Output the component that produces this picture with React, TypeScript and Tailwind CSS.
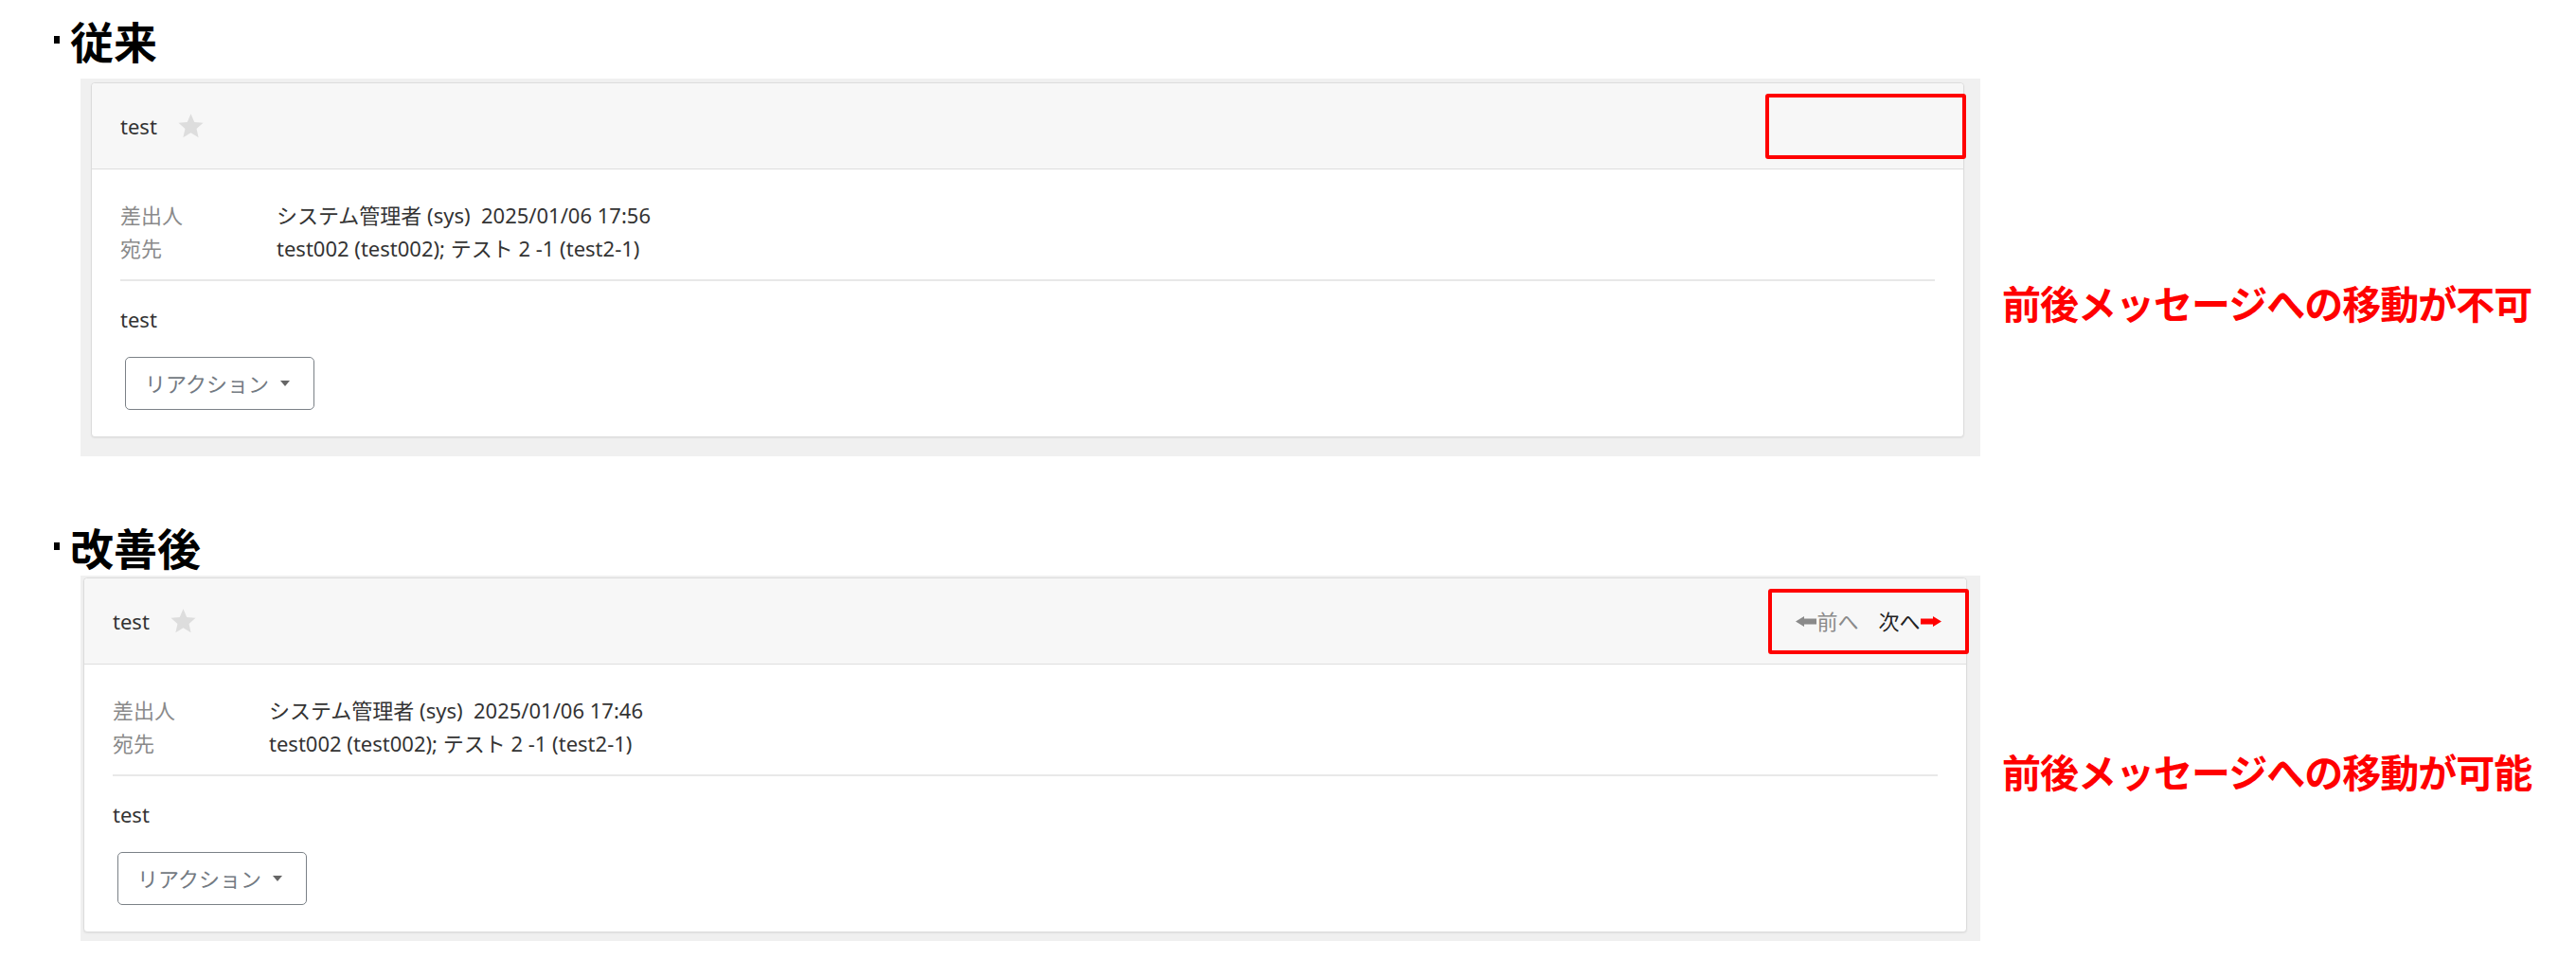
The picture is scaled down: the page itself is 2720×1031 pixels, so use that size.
import React from "react";

const BASE_FONT = "font-['Noto_Sans','Noto_Sans_CJK_JP',sans-serif]";

function Star() {
  return (
    <svg width="29" height="28" viewBox="0 0 24 23" className="block">
      <polygon
        points="12,1 15.1,8.2 22.8,8.9 17,14 18.7,21.6 12,17.6 5.3,21.6 7,14 1.2,8.9 8.9,8.2"
        fill="#dddddd"
      />
    </svg>
  );
}

function Arrow({ dir, color }: { dir: "left" | "right"; color: string }) {
  const pts =
    dir === "left"
      ? "0,5.5 9,0 9,2.5 22,2.5 22,8.5 9,8.5 9,11"
      : "22,5.5 13,0 13,2.5 0,2.5 0,8.5 13,8.5 13,11";
  return (
    <svg width="22" height="11" viewBox="0 0 22 11" className="block">
      <polygon points={pts} fill={color} />
    </svg>
  );
}

function Heading({ children }: { children: React.ReactNode }) {
  return (
    <>
      <span className="mr-[11px] inline-block h-[8px] w-[6px] bg-black" />
      {children}
    </>
  );
}

function MessageCard({ time, withNav }: { time: string; withNav?: boolean }) {
  return (
    <div className="rounded-[4px] border border-[#dcdcdc] bg-white shadow-[0_1px_2px_rgba(0,0,0,0.06)]">
      {/* header */}
      <div className="flex h-[91px] items-center justify-between rounded-t-[4px] border-b border-[#dedede] bg-[#f7f7f7] pl-[30px]">
        <div className="flex items-center gap-[21px]">
          <span className="text-[22px] leading-[35px] text-[#333]">test</span>
          <Star />
        </div>
        <div className="-mr-[3px] flex h-[69px] w-[212px] items-center justify-center rounded-[3px] border-[4px] border-[#ff0000]">
          {withNav && (
            <div className="flex items-center text-[22px] leading-[30px]">
              <span className="flex items-center text-[#8a8a8a]">
                <Arrow dir="left" color="#8a8a8a" />
                前へ
              </span>
              <span className="ml-[21px] flex items-center text-[#222]">
                次へ
                <Arrow dir="right" color="#ff0000" />
              </span>
            </div>
          )}
        </div>
      </div>

      {/* body */}
      <div className="px-[30px] pt-[31px] pb-[28px] text-[22px] leading-[35px]">
        <div className="grid grid-cols-[165px_1fr]">
          <span className="text-[#8a8a8a]">差出人</span>
          <span className="whitespace-pre text-[#333]">{`システム管理者 (sys)  ${time}`}</span>
          <span className="text-[#8a8a8a]">宛先</span>
          <span className="text-[#333]">test002 (test002); テスト 2 -1 (test2-1)</span>
        </div>
        <div className="mt-[15px] h-[2px] bg-[#e8e8e8]" />
        <p className="mt-[23px] text-[#333]">test</p>
        <button className="mt-[22px] ml-[5px] flex h-[56px] w-[200px] items-center rounded-[5px] border border-[#7b8187] bg-white pl-[20px] text-[22px] text-[#737a82]">
          リアクション
          <span className="ml-[12px] h-0 w-0 border-x-[5px] border-t-[6px] border-x-transparent border-t-[#666]" />
        </button>
      </div>
    </div>
  );
}

export default function App() {
  return (
    <div className={`h-[1031px] w-[2720px] overflow-hidden bg-white ${BASE_FONT}`}>
      {/* 従来 */}
      <h2 className="flex h-[83px] items-center pl-[57px] font-['Noto_Sans_CJK_JP',sans-serif] text-[46px] font-bold leading-none text-black">
        <Heading>従来</Heading>
      </h2>
      <div className="flex items-start">
        <div className="ml-[85px] w-[2006px] bg-[#f0f0f0] pt-[4px] pr-[17px] pb-[20px] pl-[11px]">
          <MessageCard time="2025/01/06 17:56" />
        </div>
        <p className="mt-[212px] ml-[23px] font-['Noto_Sans_CJK_JP',sans-serif] text-[41px] font-bold leading-[48px] tracking-[-1px] text-[#ff0000]">
          前後メッセージへの移動が不可
        </p>
      </div>

      {/* 改善後 */}
      <h2 className="mt-[64px] flex h-[62px] items-center pl-[57px] font-['Noto_Sans_CJK_JP',sans-serif] text-[46px] font-bold leading-none text-black">
        <Heading>改善後</Heading>
      </h2>
      <div className="flex items-start">
        <div className="ml-[85px] w-[2006px] bg-[#f0f0f0] pt-[2px] pr-[14px] pb-[9px] pl-[3px]">
          <MessageCard time="2025/01/06 17:46" withNav />
        </div>
        <p className="mt-[182px] ml-[23px] font-['Noto_Sans_CJK_JP',sans-serif] text-[41px] font-bold leading-[48px] tracking-[-1px] text-[#ff0000]">
          前後メッセージへの移動が可能
        </p>
      </div>
    </div>
  );
}
